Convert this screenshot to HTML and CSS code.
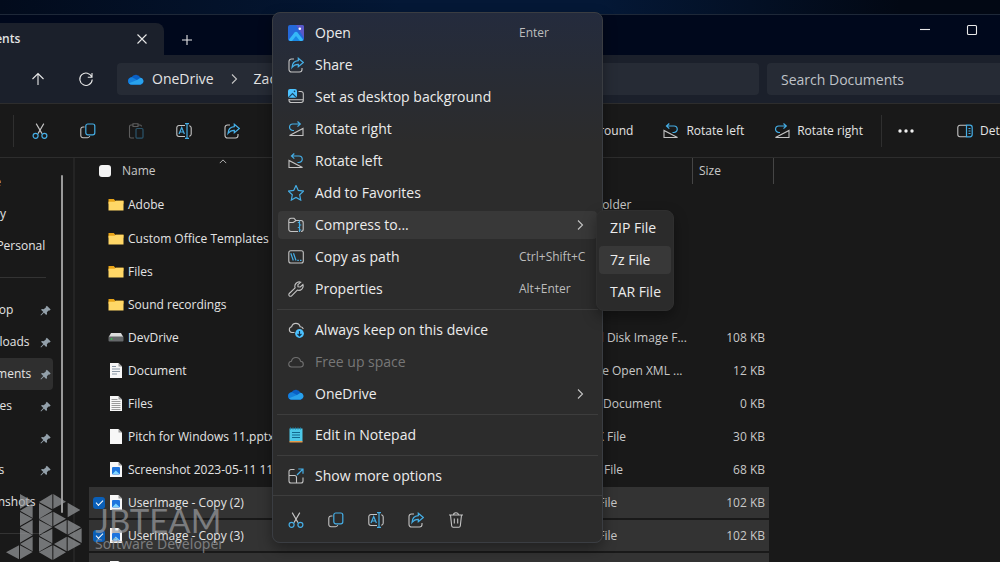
FILE: index.html
```html
<!DOCTYPE html>
<html lang="en">
<head>
<meta charset="utf-8">
<title>Documents - File Explorer</title>
<link rel="stylesheet" href="styles.css">
</head>
<body>
<svg class="sprite" aria-hidden="true">
  <symbol id="cut" viewBox="0 0 16 16"><path class="g" d="M4.2.6 10 10.6M11.8.6 6 10.6"/><circle class="b" cx="3.6" cy="12.8" r="2.5"/><circle class="b" cx="12.4" cy="12.8" r="2.5"/></symbol>
  <symbol id="copy" viewBox="0 0 16 16"><path class="g" d="M4.5 4H3a2.2 2.2 0 0 0-2.200 2.200v6.300a2.200 2.200 0 0 0 2.200 2.200h4.500A2.200 2.200 0 0 0 9.700 13"/><rect class="b" x="5.800" y="1" width="9" height="10.800" rx="2"/></symbol>
  <symbol id="paste" viewBox="0 0 16 16"><path class="g" d="M6 15H3a1.500 1.500 0 0 1-1.500-1.500v-10A1.500 1.500 0 0 1 3 2h1.500M10.500 2H12a1.500 1.500 0 0 1 1.500 1.500M5 .8h5v2.700H5z"/><rect class="b" x="8" y="5.500" width="7" height="9.700" rx="1.200"/></symbol>
  <symbol id="rename" viewBox="0 0 16 16"><path class="g" d="M9 2.500H3A2.200 2.200 0 0 0 .8 4.700v6.600A2.200 2.200 0 0 0 3 13.500h6M13.200 2.700a2.200 2.200 0 0 1 2 2v6.600a2.200 2.200 0 0 1-2 2"/><path class="b" d="M3 11l2.700-6.500L8.400 11M3.900 9h3.600M9 .7h4M9 15.300h4M11 .7v14.600"/></symbol>
  <symbol id="share" viewBox="0 0 16 16"><path class="g" d="M6 2H3.500A2.500 2.500 0 0 0 1 4.500v8A2.500 2.500 0 0 0 3.500 15h8a2.500 2.500 0 0 0 2.500-2.500V11"/><path class="b" d="M10.300 1.200l5 4.300-5 4.300V7.300C7.500 7.200 5.700 8.200 4 10.500c.2-4 2.500-6.500 6.300-6.800z"/></symbol>
  <symbol id="trash" viewBox="0 0 16 16"><path class="g" d="M1 3h14M5.500 3a2.500 2.200 0 0 1 5 0M2.500 3l1.200 11a1.500 1.500 0 0 0 1.500 1.200h5.600a1.500 1.500 0 0 0 1.500-1.200l1.200-11M6.300 6.500v5M9.700 6.500v5"/></symbol>
  <symbol id="rotleft" viewBox="0 0 16 16"><path class="b" d="M3.500 3H11a3.200 3.200 0 0 1 0 6.500H9.500M6.300.5 3.500 3l2.800 2.600"/><path class="g" d="M1 7.500v7h13.500z"/></symbol>
  <symbol id="rotright" viewBox="0 0 16 16"><path class="b" d="M12 3H4.800a3.200 3.200 0 0 0 0 6.500H6M9.500.5 12.300 3 9.500 5.600"/><path class="g" d="M15 7.500v7H1.500z"/></symbol>
  <symbol id="photo" viewBox="0 0 16 16"><rect width="16" height="16" rx="2" fill="#2468d8"/><path d="M8 0h6a2 2 0 0 1 2 2v11z" fill="#5b58c9"/><path d="M1 14.500 6.500 7.500a2 2 0 0 1 3 0L15 14.500A2 2 0 0 1 14 16H2a2 2 0 0 1-1-1.500z" fill="#35b8f7"/><path d="M8 11l4 5H4z" fill="#1988e6"/><circle cx="11.800" cy="3.800" r="1.300" fill="#fff"/></symbol>
  <symbol id="wallpaper" viewBox="0 0 16 16"><path class="g" d="M10.500 2.500H13A2.200 2.200 0 0 1 15.300 4.700v6.600a2.200 2.200 0 0 1-2.200 2.200H3.500A2.200 2.200 0 0 1 1 11.300V10M1.500 10.700h13.500"/><rect width="9" height="8.800" rx="2" fill="#4cc2ff"/><path d="M1.200 7.800 4.500 4.500l3.300 3.300" fill="none" stroke="#1d4864" stroke-width="1.200"/><circle cx="6.500" cy="2.400" r=".8" fill="#1d4864"/></symbol>
  <symbol id="star" viewBox="0 0 16 16"><path class="b" d="M8 .5l2.300 4.900 5.300.7-3.900 3.700 1 5.300L8 12.500l-4.700 2.600 1-5.300L.4 6.100l5.300-.7z"/></symbol>
  <symbol id="zip" viewBox="0 0 16 16"><path class="g" d="M10 14.500H3a2.200 2.200 0 0 1-2.200-2.200V3.500A2.200 2.200 0 0 1 3 1.300h3l2 2.200h5a2.200 2.200 0 0 1 2.200 2.200v6.600a2.200 2.200 0 0 1-2.200 2.200M.8 5.500h4.500L8 3.500"/><path class="b" d="M11.500 3.500v11.500M9.800 5.500h2M11.500 8h1.800M9.800 10.500h2M11.500 13h1.800"/></symbol>
  <symbol id="path" viewBox="0 0 16 16"><rect class="g" x=".8" y="1.800" width="14.500" height="12.200" rx="2"/><path class="b" d="M2.800 4.300l2.500 7.200M5.500 4.300l2.500 7.200M9.300 11.300h1.500M12 11.300h1.500"/></symbol>
  <symbol id="wrench" viewBox="0 0 16 16"><path class="g" d="M12.700 1.200a4.400 4.400 0 0 0-5.600 5.600L1.300 12.500a1.600 1.600 0 0 0 2.300 2.300L9.300 9.100a4.400 4.400 0 0 0 5.600-5.600L12.300 6 10 5.700 9.900 3.700z"/></symbol>
  <symbol id="keep" viewBox="0 0 16 16"><path class="g" d="M6.500 10.500h-2.700A2.900 2.900 0 0 1 3.600 4.800a4.400 4.400 0 0 1 8.600 0A3 3 0 0 1 15.300 7"/><circle cx="11.500" cy="11.500" r="4.400" fill="#4cc2ff"/><path d="M11.500 9v4.500M9.500 11.800l2 2 2-2" fill="none" stroke="#133048" stroke-width="1.200"/></symbol>
  <symbol id="cloud" viewBox="0 0 16 16"><path class="g" d="M3.800 13a2.900 2.900 0 0 1-.3-5.800 4.600 4.600 0 0 1 9 0A2.900 2.900 0 0 1 12.300 13z"/></symbol>
  <symbol id="onedrive" viewBox="0 0 16 16"><path d="M3.500 6.200a5 5 0 0 1 9 .6A3.400 3.400 0 0 1 12.500 13.500H3.600A3.600 3.600 0 0 1 3.500 6.200z" fill="#0a5fc4"/><path d="M.2 9.500Q1 6.500 4 6.300L14.500 12a3 3 0 0 1-2 1.500H3.600A3.600 3.600 0 0 1 .2 9.500z" fill="#1580dc"/><path d="M9 9l3.500-2.200a3.400 3.400 0 0 1 2.500 5L12.500 13.500H3.600a3.500 3.500 0 0 1-2.600-1.200z" fill="#29a2ec"/></symbol>
  <symbol id="notepad" viewBox="0 0 16 16"><path d="M1.500 1.500h13v13h-13z" fill="#4cc8e8"/><path d="M1.500 14h13v1.500h-13z" fill="#e59a4c"/><path d="M2.500.5v2M5 .5v2M7.500.5v2M10 .5v2M12.500.5v2" stroke="#1c84ad"/><path d="M4 5.500h8M4 8h8M4 10.500h8" stroke="#12698f"/></symbol>
  <symbol id="more" viewBox="0 0 16 16"><path class="g" d="M6.500 1.500H3A2 2 0 0 0 1 3.500V13a2 2 0 0 0 2 2h10a2 2 0 0 0 2-2V9.500M1 7.500h5.500a2 2 0 0 1 2 2V15"/><path class="b" d="M9 7l6-6M10.300 1H15v4.700"/></symbol>
  <symbol id="chev" viewBox="0 0 16 16"><path class="g" d="M6 3.500 10.500 8 6 12.500"/></symbol>
  <symbol id="pin" viewBox="0 0 16 16"><path d="M10 1 15.500 6.500 14 8h-1.500L10 10.700l.3 2.500L9 14.500 5.700 11.200 1.500 15.300.7 14.500 4.800 10.300 1.500 7l1.300-1.300 2.500.3L8.500 3.500V2.500z" fill="#93a0aa"/></symbol>
  <symbol id="folder" viewBox="0 0 16 16"><path d="M.5 2h5.300L7.300 3.700h8.200v3H.5z" fill="#e8a317"/><path d="M.5 4.800h6L8 3.800h7.500v9.700H.5z" fill="#ffd767"/></symbol>
  <symbol id="drive" viewBox="0 0 16 16"><path d="M3 3h10l2.300 4H.7z" fill="#dcdcdc"/><rect x=".5" y="6.500" width="15" height="5" rx="1" fill="#65686a"/><circle cx="3.500" cy="9" r=".9" fill="#35c04a"/></symbol>
  <symbol id="blank" viewBox="0 0 16 16"><path d="M2 0h8.500L14 3.500V15H2z" fill="#f7f7f7"/><path d="M10.500 0v3.500H14z" fill="#9c9c9c"/></symbol>
  <symbol id="doc" viewBox="0 0 16 16"><use href="#blank"/><path d="M4 3.500h4M4 6h8M4 8.500h8M4 11h5" stroke="#8997a5"/></symbol>
  <symbol id="text" viewBox="0 0 16 16"><use href="#blank"/><path d="M3.500 3.500h6M3.500 5.500h9M3.500 7.500h9M3.500 9.500h9M3.500 11.500h9M3.500 13.500h9" stroke="#9a9a9a"/></symbol>
  <symbol id="image" viewBox="0 0 16 16"><use href="#blank"/><rect x="4" y="5" width="8" height="7.500" rx="1" fill="#1e74dd"/><path d="M4.500 12 7.800 8.500l3.700 3.500z" fill="#7fd6ff"/></symbol>
  <symbol id="panel" viewBox="0 0 16 16"><path class="g" d="M9 2.200H3A2.200 2.200 0 0 0 .8 4.400v7.200A2.200 2.200 0 0 0 3 13.800h6"/><path class="b" d="M9.500 2.200h3.500a2.200 2.200 0 0 1 2.200 2.200v7.200a2.200 2.200 0 0 1-2.200 2.200H9.500zM11.500 5.500h2M11.500 8h2M11.500 10.500h2"/></symbol>
</svg>

<main class="window">
  <header class="titlebar">
    <div class="tab"><span class="tab-title">Documents</span>
      <button class="ghost" aria-label="Close tab"><svg class="icon glyph"><path d="M3.500 3.500l9 9M12.500 3.500l-9 9"/></svg></button></div>
    <button class="ghost new-tab" aria-label="New tab"><svg class="icon glyph"><path d="M8 3v10M3 8h10"/></svg></button>
    <div class="caption">
      <button class="ghost" aria-label="Minimize"><svg class="icon glyph"><path d="M3 7.500h10"/></svg></button>
      <button class="ghost" aria-label="Maximize"><svg class="icon glyph"><rect x="3.500" y="3.500" width="9" height="9" rx="1"/></svg></button>
    </div>
  </header>

  <div class="addressbar">
    <button class="ghost" aria-label="Up"><svg class="icon glyph"><path d="M8 14V2.500M2.500 8 8 2.500 13.500 8"/></svg></button>
    <button class="ghost" aria-label="Refresh"><svg class="icon glyph"><path d="M13.800 6A6.200 6.200 0 1 0 14.200 8.500M14 2v4.300H9.800"/></svg></button>
    <nav class="crumbs" aria-label="Address">
      <svg class="icon"><use href="#onedrive"/></svg>
      <a href="#">OneDrive</a>
      <svg class="icon crumb-sep"><use href="#chev"/></svg>
      <a href="#">Zac</a>
    </nav>
    <input class="search" type="search" placeholder="Search Documents" aria-label="Search Documents">
  </div>

  <div class="toolbar">
    <div class="tools">
      <button class="ghost" aria-label="Cut"><svg class="icon"><use href="#cut"/></svg></button>
      <button class="ghost" aria-label="Copy"><svg class="icon"><use href="#copy"/></svg></button>
      <button class="ghost" aria-label="Paste" disabled><svg class="icon"><use href="#paste"/></svg></button>
      <button class="ghost" aria-label="Rename"><svg class="icon"><use href="#rename"/></svg></button>
      <button class="ghost" aria-label="Share"><svg class="icon"><use href="#share"/></svg></button>
    </div>
    <div class="commands">
      <button class="ghost"><svg class="icon"><use href="#wallpaper"/></svg>Set as background</button>
      <button class="ghost"><svg class="icon"><use href="#rotleft"/></svg>Rotate left</button>
      <button class="ghost"><svg class="icon"><use href="#rotright"/></svg>Rotate right</button>
    </div>
    <button class="ghost overflow" aria-label="See more"><svg class="icon dots"><circle cx="2" cy="8" r="1.700"/><circle cx="8" cy="8" r="1.700"/><circle cx="14" cy="8" r="1.700"/></svg></button>
    <button class="ghost details"><svg class="icon"><use href="#panel"/></svg>Details</button>
  </div>

  <div class="content">
    <div class="sidebar">
      <nav class="places" aria-label="Places">
        <a href="#">Home</a>
        <a href="#">Gallery</a>
        <a href="#">Zac - Personal</a>
        <hr>
        <a href="#">Desktop<svg class="pin"><use href="#pin"/></svg></a>
        <a href="#">Downloads<svg class="pin"><use href="#pin"/></svg></a>
        <a href="#" class="current">Documents<svg class="pin"><use href="#pin"/></svg></a>
        <a href="#">Pictures<svg class="pin"><use href="#pin"/></svg></a>
        <a href="#">Music<svg class="pin"><use href="#pin"/></svg></a>
        <a href="#">Videos<svg class="pin"><use href="#pin"/></svg></a>
        <a href="#">Screenshots</a>
        <hr>
      </nav>
      <div class="scroll"></div>
    </div>

    <div class="files">
      <table>
        <colgroup><col><col class="col-type"><col class="col-size"></colgroup>
        <thead>
          <tr>
            <th><span class="head-name"><input type="checkbox" class="pick all" aria-label="Select all">Name</span></th>
            <th><span class="head-type">Type</span></th>
            <th><span class="head-size">Size</span></th>
          </tr>
        </thead>
        <tbody>
          <tr><td><span class="file"><svg class="icon"><use href="#folder"/></svg>Adobe</span></td><td>File folder</td><td></td></tr>
          <tr><td><span class="file"><svg class="icon"><use href="#folder"/></svg>Custom Office Templates</span></td><td>File folder</td><td></td></tr>
          <tr><td><span class="file"><svg class="icon"><use href="#folder"/></svg>Files</span></td><td>File folder</td><td></td></tr>
          <tr><td><span class="file"><svg class="icon"><use href="#folder"/></svg>Sound recordings</span></td><td>File folder</td><td></td></tr>
          <tr><td><span class="file"><svg class="icon"><use href="#drive"/></svg>DevDrive</span></td><td>Hard Disk Image F...</td><td>108 KB</td></tr>
          <tr><td><span class="file"><svg class="icon"><use href="#doc"/></svg>Document</span></td><td>Office Open XML ...</td><td>12 KB</td></tr>
          <tr><td><span class="file"><svg class="icon"><use href="#text"/></svg>Files</span></td><td>Text Document</td><td>0 KB</td></tr>
          <tr><td><span class="file"><svg class="icon"><use href="#blank"/></svg>Pitch for Windows 11.pptx</span></td><td>PPTX File</td><td>30 KB</td></tr>
          <tr><td><span class="file"><svg class="icon"><use href="#image"/></svg>Screenshot 2023-05-11 111</span></td><td>PNG File</td><td>68 KB</td></tr>
          <tr class="selected"><td><span class="file"><input type="checkbox" class="pick" aria-label="Select UserImage - Copy (2)" checked><svg class="icon"><use href="#image"/></svg>UserImage - Copy (2)</span></td><td>JPG File</td><td>102 KB</td></tr>
          <tr class="selected"><td><span class="file"><input type="checkbox" class="pick" aria-label="Select UserImage - Copy (3)" checked><svg class="icon"><use href="#image"/></svg>UserImage - Copy (3)</span></td><td>JPG File</td><td>102 KB</td></tr>
          <tr class="selected"><td><span class="file"><input type="checkbox" class="pick" aria-label="Select UserImage - Copy (4)" checked><svg class="icon"><use href="#image"/></svg>UserImage - Copy (4)</span></td><td>JPG File</td><td>102 KB</td></tr>
        </tbody>
      </table>
      <svg class="sort" viewBox="0 0 10 6"><path class="g" d="M1 5l4-4 4 4"/></svg>
    </div>
  </div>
</main>

<div class="menu" role="menu">
  <button role="menuitem"><svg class="icon"><use href="#photo"/></svg>Open<kbd>Enter</kbd></button>
  <button role="menuitem"><svg class="icon"><use href="#share"/></svg>Share</button>
  <button role="menuitem"><svg class="icon"><use href="#wallpaper"/></svg>Set as desktop background</button>
  <button role="menuitem"><svg class="icon"><use href="#rotright"/></svg>Rotate right</button>
  <button role="menuitem"><svg class="icon"><use href="#rotleft"/></svg>Rotate left</button>
  <button role="menuitem"><svg class="icon"><use href="#star"/></svg>Add to Favorites</button>
  <button role="menuitem" class="hover"><svg class="icon"><use href="#zip"/></svg>Compress to...<svg class="icon more"><use href="#chev"/></svg></button>
  <button role="menuitem"><svg class="icon"><use href="#path"/></svg>Copy as path<kbd>Ctrl+Shift+C</kbd></button>
  <button role="menuitem"><svg class="icon"><use href="#wrench"/></svg>Properties<kbd>Alt+Enter</kbd></button>
  <hr>
  <button role="menuitem"><svg class="icon"><use href="#keep"/></svg>Always keep on this device</button>
  <button role="menuitem" disabled><svg class="icon"><use href="#cloud"/></svg>Free up space</button>
  <button role="menuitem"><svg class="icon"><use href="#onedrive"/></svg>OneDrive<svg class="icon more"><use href="#chev"/></svg></button>
  <hr>
  <button role="menuitem"><svg class="icon"><use href="#notepad"/></svg>Edit in Notepad</button>
  <hr>
  <button role="menuitem"><svg class="icon"><use href="#more"/></svg>Show more options</button>
  <div class="quick">
    <button class="ghost" aria-label="Cut"><svg class="icon"><use href="#cut"/></svg></button>
    <button class="ghost" aria-label="Copy"><svg class="icon"><use href="#copy"/></svg></button>
    <button class="ghost" aria-label="Rename"><svg class="icon"><use href="#rename"/></svg></button>
    <button class="ghost" aria-label="Share"><svg class="icon"><use href="#share"/></svg></button>
    <button class="ghost" aria-label="Delete"><svg class="icon"><use href="#trash"/></svg></button>
  </div>
</div>

<div class="menu submenu" role="menu">
  <button role="menuitem">ZIP File</button>
  <button role="menuitem" class="hover">7z File</button>
  <button role="menuitem">TAR File</button>
</div>

<div class="brand">
  <svg class="brand-logo" viewBox="0 0 270 216" aria-hidden="true">
    <path d="M60 12v44l38-22zM98 40v44L60 62zM60 66v42l38-22zM98 90v44l-38-22zM60 116v42l38-22zM98 140v44l-38-22zM60 166v42l38-22zM57 166v42L18 187z"/>
    <path d="M157 12v46l-40-22zM117 40v46l40-24zM157 66v44l-40-23zM117 91v44l40-23zM157 116v44l-40-23zM117 141v44l40-23zM157 166v44l-40-23zM160 12v44l38-21zM160 65v43l38-22zM200 90v43l-38-22zM203 38v44l38-22zM203 90v44l40-22zM245 115v44l-40-23zM203 140v44l40-22zM200 140v44l-38-22zM160 166v43l38-22z"/>
  </svg>
  <div class="brand-text"><span class="brand-name">JBTEAM</span><span class="brand-tag">Software Developer</span></div>
</div>
</body>
</html>
```
FILE: styles.css
```css
* { box-sizing: border-box; }
html, body { height: 100%; }
body {
  margin: 0;
  overflow: hidden;
  position: relative;
  background: linear-gradient(90deg, #020b1c, #041836 40%, #041836 60%, #020814 90%);
  color: #e4e4e4;
  font: 12px/16px "Open Sans", "Noto Sans", sans-serif;
}
button, input { font: inherit; color: inherit; }
a { color: inherit; text-decoration: none; }
hr { border: 0; margin: 0; height: 1px; background: #3d3d3d; }

.sprite { position: absolute; width: 0; height: 0; }
.icon { width: 16px; height: 16px; flex: none; }
.g { fill: none; stroke: #c4c4c4; stroke-width: 1.1; }
.b { fill: none; stroke: #45aee6; stroke-width: 1.2; }
.glyph { fill: none; stroke: #e8e8e8; stroke-width: 1.1; }
.dots { fill: #f0f0f0; }
.ghost {
  display: inline-flex;
  align-items: center;
  justify-content: center;
  gap: 7px;
  padding: 0;
  border: 0;
  background: none;
  white-space: nowrap;
}

/* The window hangs over both sides of the desktop. */
.window {
  display: flex;
  flex-direction: column;
  height: 100%;
  margin: 0 -60px 0 -80px;
  padding-top: 14px;
}
.titlebar {
  display: flex;
  align-items: center;
  height: 41px;
  border-top: 1px solid #1e2838;
  background: #00081c;
}
.tab {
  display: flex;
  align-items: center;
  justify-content: space-between;
  align-self: flex-end;
  width: 244px;
  height: 32px;
  padding: 0 14px 0 34px;
  border-radius: 0 8px 0 0;
  background: #1b202b;
  font-weight: 600;
}
.new-tab { margin: 10px 0 0 15px; }
.caption { display: flex; gap: 31px; margin: 0 80px 10px auto; }

.addressbar {
  display: flex;
  align-items: center;
  height: 48px;
  padding: 0 12px 0 110px;
  background: #1b202b;
}
.addressbar .ghost { margin-right: 32px; }
.addressbar .ghost + .ghost { margin-right: 23px; }
.crumbs {
  flex: 1;
  display: flex;
  align-items: center;
  height: 32px;
  padding-left: 11px;
  border-radius: 4px;
  background: #262b35;
  font-size: 14px;
}
.crumbs a { margin-left: 8px; }
.crumb-sep { margin: 0 4px 0 12px; }
.search {
  width: 281px;
  height: 32px;
  margin-left: 8px;
  padding: 0 14px;
  border: 0;
  border-radius: 4px;
  background: #262b35;
  font-size: 14px;
}
.search::placeholder { color: #bfc2c8; opacity: 1; }

.toolbar {
  display: flex;
  align-items: center;
  height: 55px;
  padding-left: 93px;
  border-top: 1px solid #2d2d2d;
  border-bottom: 1px solid #2d2d2d;
  background: #191919;
}
.tools { display: flex; align-items: center; gap: 32px; height: 32px; padding-left: 18px; border-left: 1px solid #2f2f2f; }
.tools button:disabled { opacity: .4; }
.commands { display: flex; gap: 30px; width: 623px; justify-content: flex-end; }
.overflow { height: 32px; margin-left: 18px; padding-left: 16px; border-left: 1px solid #2f2f2f; }
.details { margin-left: 43px; }

.content { flex: 1; min-height: 0; display: flex; background: #191919; overflow: hidden; }
.sidebar { display: flex; flex: none; width: 155px; border-right: 2px solid #242424; }
.places { width: 133px; padding-top: 8px; }
.places a {
  display: flex;
  align-items: center;
  justify-content: space-between;
  height: 32px;
  padding: 0 2px 0 47px;
  border-radius: 4px;
  white-space: nowrap;
}
.places .current { background: #2f2f2f; }
.places hr { margin: 15px 7px 16px 0; background: #333; }
.pin { width: 11px; height: 11px; }
.scroll { width: 2px; height: 338px; margin: 17px 0 0 8px; border-radius: 1px; background: #9a9a9a; }

.files { position: relative; flex: 1; padding-left: 14px; }
table { width: 680px; table-layout: fixed; border-collapse: collapse; }
.col-type { width: 116px; }
.col-size { width: 77px; }
th, td { padding: 0; text-align: left; font-weight: 400; white-space: nowrap; }
th { height: 31px; vertical-align: top; color: #c8c8c8; }
th span { display: flex; align-items: center; height: 26px; }
.head-name { gap: 11px; padding-left: 10px; }
.head-size { margin-right: -5px; padding-left: 6px; border: solid #454545; border-width: 0 1px; }
td {
  height: 33px;
  border: solid transparent;
  border-width: 2px 0 3px;
  background-clip: padding-box;
  color: #c8c8c8;
}
td:first-child { color: #e4e4e4; }
td:last-child { padding-right: 4px; text-align: right; }
.selected td { background-color: #333; }
.file { display: flex; align-items: center; gap: 4px; padding-left: 19px; }
.selected .file { padding-left: 4px; }
.pick {
  appearance: none;
  flex: none;
  width: 12px;
  height: 12px;
  margin: 0;
  border-radius: 3px;
  background: #0a5fb8;
  display: grid;
  place-items: center;
}
.selected .pick { margin-right: -1px; }
.pick:checked::before { content: ""; width: 6px; height: 3px; margin-bottom: 2px; border: solid #fff; border-width: 0 0 1px 1px; transform: rotate(-45deg); }
.all { background: #f3f3f3; }
.sort { position: absolute; left: 144px; top: 1px; width: 8px; height: 5px; }

.menu {
  position: absolute;
  left: 272px;
  top: 12px;
  width: 331px;
  padding: 4px 5px 0;
  border: 1px solid #3a3d42;
  border-radius: 8px;
  background: linear-gradient(#242b3d, #282c35 60px, #2c2c2c 130px);
  box-shadow: 0 6px 14px rgb(0 0 0 / .35);
  font-size: 14px;
}
.menu > button {
  display: flex;
  align-items: center;
  gap: 11px;
  width: 100%;
  height: 28px;
  margin: 2px 0 4px;
  padding: 0 9px 0 10px;
  border: 0;
  border-radius: 4px;
  background: none;
  color: #ececec;
  text-align: left;
}
.menu > button + button { margin-top: 0; }
.menu > .hover { background: #383838; }
.menu > button:disabled { color: #777; }
.menu > button:disabled .icon { opacity: .45; }
.menu kbd { width: 69px; margin-left: auto; font: 12px/16px "Open Sans", sans-serif; color: #bdbdbd; white-space: nowrap; }
.menu .more { margin-left: auto; }
.menu hr { margin: 6px -1px; }
.quick { display: flex; gap: 24px; margin: 5px -5px 0; padding: 16px 15px 14px; border-top: 1px solid #3d3d3d; }
.submenu { left: 596px; top: 210px; width: 78px; padding: 3px 2px 0; background: #2b2b2b; border-color: #2f2f2f; }
.submenu > button { margin: 0 0 4px; padding: 0 11px; white-space: nowrap; }

.brand { position: absolute; left: 0; bottom: 0; display: flex; align-items: flex-end; color: #9a9c9f; opacity: .7; pointer-events: none; }
.brand-logo { width: 90px; height: 72px; fill: #9a9c9f; }
.brand-text { display: flex; flex-direction: column; padding: 0 0 10px 5px; }
.brand-name { font: 400 33px/32px Lato, sans-serif; }
.brand-tag { font: 14px/16px "Noto Sans", sans-serif; }
```
